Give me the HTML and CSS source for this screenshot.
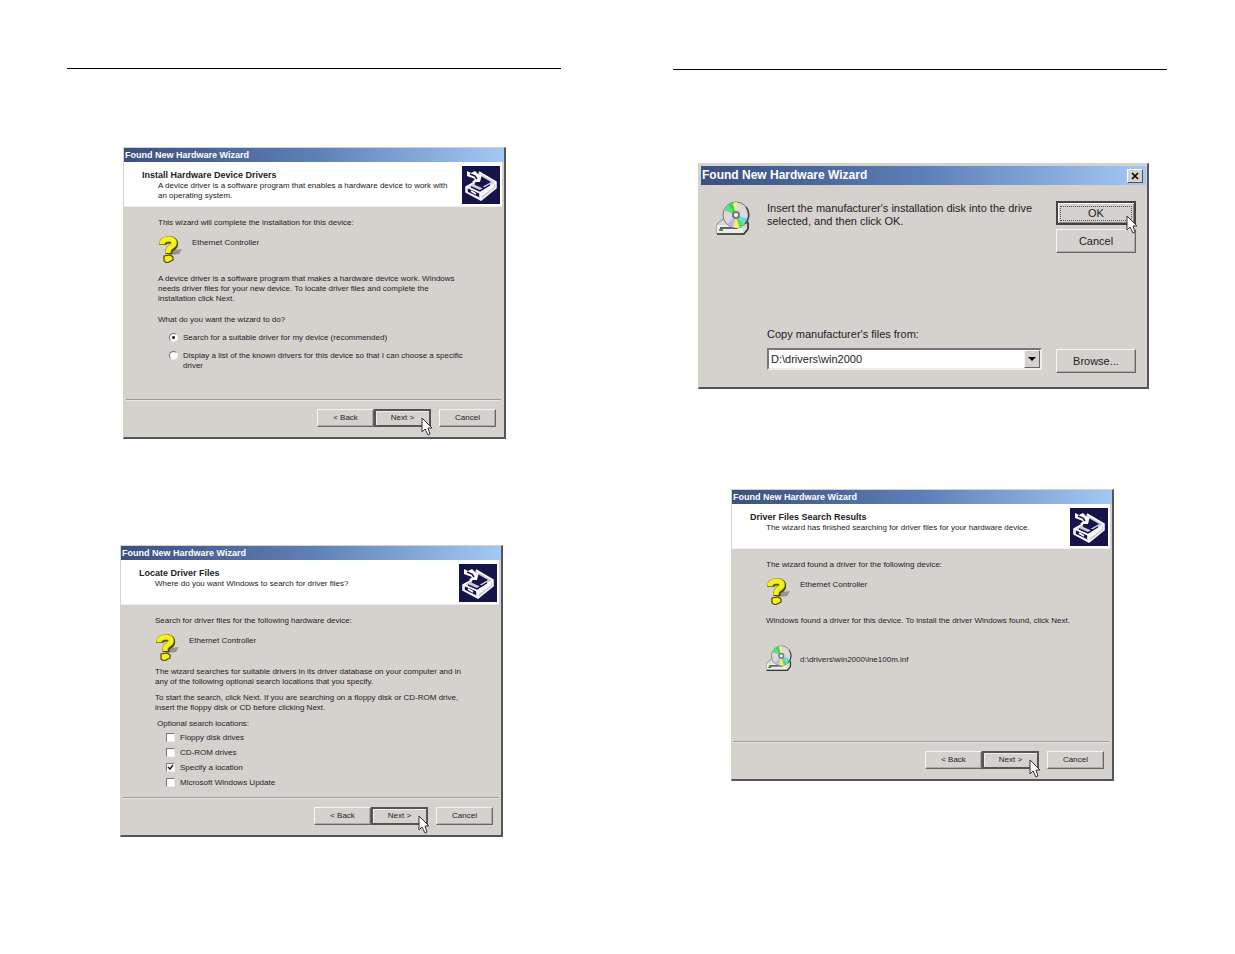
FILE: index.html
```
<!DOCTYPE html>
<html lang="en">

<head>
    <meta charset="UTF-8">
    <meta name="viewport" content="width=device-width, initial-scale=1.0">
    <title>Found New Hardware Wizard</title>
    <link rel="stylesheet" href="styles.css">
</head>

<body>
    <!-- shared icons -->
    <svg class="icon-defs" aria-hidden="true">
        <symbol id="icon-card" viewBox="0 0 38 38">
            <rect width="38" height="38" fill="#14144a"/>
            <path d="M17 6L34 16V22L19 34L4 26V21L13 16Z" fill="#c9cbdc"/>
            <path d="M17 9L29 16L20 21L12 17L18 13Z" fill="#14144a"/>
            <path d="M6 22L17 27V31L6 26Z" fill="#14144a"/>
            <path d="M20 27L32 18V21L20 30Z" fill="#fff"/>
            <path d="M9 21L18 25L28 19M13 18L22 22" fill="none" stroke="#14144a" stroke-width="1.5"/>
            <path d="M17 6L34 16V22L19 34L4 26V21L13 16M5 21L18 27L33 17M19 27V33M9 25L14 28" fill="none" stroke="#fff" stroke-width="1.5"/>
            <path d="M5 5L9 7L13 5L17 9L20 8L18 16H10L13 13L5 10Z" fill="#fff"/>
            <path d="M8 8L13 10L15 13" fill="none" stroke="#14144a" stroke-width="1.5"/>
        </symbol>
        <symbol id="icon-question" viewBox="0 0 26 27">
            <path d="M15 14L24 13L21 18L13 19Z" fill="#969492"/>
            <path d="M5 9C5 4 9 4 12 4C17 4 18 8 15 11C12 13 11 13 11 18" fill="none" stroke="#4a4708" stroke-width="7"/>
            <path d="M4 9C4 4 8 3 11 3C16 3 18 8 14 10C11 12 10 13 10 17" fill="none" stroke="#8a8410" stroke-width="6"/>
            <path d="M4 8C4 4 8 3 11 3C16 3 18 7 14 10C11 12 10 13 10 17" fill="none" stroke="#f6f01c" stroke-width="5"/>
            <path d="M6 20L12 19L15 21V24L9 27L6 25Z" fill="#f6f01c" stroke="#4a4708" stroke-width="1.2"/>
        </symbol>
        <symbol id="icon-disc" viewBox="0 0 34 35">
            <path d="M1 23L7 18H30L32 21V28L28 33H1Z" fill="#d9d9d9" stroke="#888" stroke-width="1"/>
            <path d="M1 24H27V32H1Z" fill="#eee"/>
            <path d="M1 33H28L32 28V21M4 27H22" fill="none" stroke="#333" stroke-width="1.6"/>
            <path d="M3 29H7" stroke="#38a038" stroke-width="2"/>
            <circle cx="20" cy="14" r="13" fill="#dadada" stroke="#777" stroke-width="1"/>
            <path d="M20 14L8 9A13 13 0 0 1 12 4Z" fill="#61dc8a"/>
            <path d="M20 14L12 4A13 13 0 0 1 17 2Z" fill="#36d84a"/>
            <path d="M20 14L17 2A13 13 0 0 1 21 1Z" fill="#f5f17a"/>
            <path d="M20 14L32 18A13 13 0 0 1 28 24Z" fill="#62dce2"/>
            <path d="M20 14L28 24A13 13 0 0 1 23 27Z" fill="#54df58"/>
            <path d="M20 14L23 27A13 13 0 0 1 17 26Z" fill="#f4ee68"/>
            <path d="M20 14L17 26A13 13 0 0 1 11 23Z" fill="#c6b4e8"/>
            <path d="M30 6A13 13 0 0 1 29 23" fill="none" stroke="#444" stroke-width="1.4"/>
            <circle cx="20" cy="14" r="4" fill="#777"/>
            <circle cx="20" cy="14" r="2" fill="#fff"/>
        </symbol>
        <symbol id="icon-cursor" viewBox="0 0 12 19">
            <path d="M1 1V15L4 12L7 18L9 17L7 11H11Z" fill="#fff" stroke="#333" stroke-width="1"/>
        </symbol>
    </svg>

    <main class="spread">
        <section class="page">
            <div class="dialog dialog-install">
                <div class="title-bar">Found New Hardware Wizard</div>
                <header class="dialog-header">
                    <div>
                        <h2>Install Hardware Device Drivers</h2>
                        <p>A device driver is a software program that enables a hardware device to work with<br>an operating system.</p>
                    </div>
                    <svg class="card-icon"><use href="#icon-card"/></svg>
                </header>
                <div class="dialog-body">
                    <p>This wizard will complete the installation for this device:</p>
                    <div class="device">
                        <svg class="device-icon"><use href="#icon-question"/></svg>
                        <span>Ethernet Controller</span>
                    </div>
                    <p class="spaced">A device driver is a software program that makes a hardware device work. Windows<br>needs driver files for your new device. To locate driver files and complete the<br>installation click Next.</p>
                    <p class="spaced">What do you want the wizard to do?</p>
                    <div class="radios">
                        <label class="option"><input type="radio" name="action" checked><span>Search for a suitable driver for my device (recommended)</span></label>
                        <label class="option"><input type="radio" name="action"><span>Display a list of the known drivers for this device so that I can choose a specific<br>driver</span></label>
                    </div>
                </div>
                <footer class="dialog-footer">
                    <button type="button">&lt; Back</button>
                    <button type="button" class="default">Next &gt;<svg class="cursor"><use href="#icon-cursor"/></svg></button>
                    <button type="button" class="cancel">Cancel</button>
                </footer>
            </div>

            <div class="dialog dialog-locate">
                <div class="title-bar">Found New Hardware Wizard</div>
                <header class="dialog-header">
                    <div>
                        <h2>Locate Driver Files</h2>
                        <p>Where do you want Windows to search for driver files?</p>
                    </div>
                    <svg class="card-icon"><use href="#icon-card"/></svg>
                </header>
                <div class="dialog-body">
                    <p>Search for driver files for the following hardware device:</p>
                    <div class="device">
                        <svg class="device-icon"><use href="#icon-question"/></svg>
                        <span>Ethernet Controller</span>
                    </div>
                    <p class="close">The wizard searches for suitable drivers in its driver database on your computer and in<br>any of the following optional search locations that you specify.</p>
                    <p class="close">To start the search, click Next. If you are searching on a floppy disk or CD-ROM drive,<br>insert the floppy disk or CD before clicking Next.</p>
                    <p class="close options-title">Optional search locations:</p>
                    <div class="checks">
                        <label class="option"><input type="checkbox"><span>Floppy disk drives</span></label>
                        <label class="option"><input type="checkbox"><span>CD-ROM drives</span></label>
                        <label class="option"><input type="checkbox" checked><span>Specify a location</span></label>
                        <label class="option"><input type="checkbox"><span>Microsoft Windows Update</span></label>
                    </div>
                </div>
                <footer class="dialog-footer">
                    <button type="button">&lt; Back</button>
                    <button type="button" class="default">Next &gt;<svg class="cursor"><use href="#icon-cursor"/></svg></button>
                    <button type="button" class="cancel">Cancel</button>
                </footer>
            </div>
        </section>

        <section class="page page-right">
            <div class="dialog dialog-disk">
                <div class="title-bar">
                    <span>Found New Hardware Wizard</span>
                    <button type="button" class="close-button" aria-label="Close">
                        <svg viewBox="0 0 8 8"><path d="M1 1L7 7M7 1L1 7" stroke="#000" stroke-width="1.6"/></svg>
                    </button>
                </div>
                <div class="disk-body">
                    <svg class="disk-icon"><use href="#icon-disc"/></svg>
                    <div class="disk-form">
                        <p>Insert the manufacturer's installation disk into the drive<br>selected, and then click OK.</p>
                        <div>
                            <label for="source">Copy manufacturer's files from:</label>
                            <div class="combo">
                                <select id="source">
                                    <option>D:\drivers\win2000</option>
                                </select>
                                <span class="combo-arrow"></span>
                            </div>
                        </div>
                    </div>
                    <div class="disk-buttons">
                        <button type="button" class="default"><span class="focus">OK</span><svg class="cursor"><use href="#icon-cursor"/></svg></button>
                        <button type="button">Cancel</button>
                        <button type="button" class="browse">Browse...</button>
                    </div>
                </div>
            </div>

            <div class="dialog dialog-results">
                <div class="title-bar">Found New Hardware Wizard</div>
                <header class="dialog-header">
                    <div>
                        <h2>Driver Files Search Results</h2>
                        <p>The wizard has finished searching for driver files for your hardware device.</p>
                    </div>
                    <svg class="card-icon"><use href="#icon-card"/></svg>
                </header>
                <div class="dialog-body">
                    <p>The wizard found a driver for the following device:</p>
                    <div class="device">
                        <svg class="device-icon"><use href="#icon-question"/></svg>
                        <span>Ethernet Controller</span>
                    </div>
                    <p class="spaced">Windows found a driver for this device. To install the driver Windows found, click Next.</p>
                    <div class="device driver-file">
                        <svg class="device-icon"><use href="#icon-disc"/></svg>
                        <span>d:\drivers\win2000\lne100m.inf</span>
                    </div>
                </div>
                <footer class="dialog-footer">
                    <button type="button">&lt; Back</button>
                    <button type="button" class="default">Next &gt;<svg class="cursor"><use href="#icon-cursor"/></svg></button>
                    <button type="button" class="cancel">Cancel</button>
                </footer>
            </div>
        </section>
    </main>
</body>

</html>
```
FILE: styles.css
```
* {
    box-sizing: border-box;
}

body {
    margin: 0;
    background-color: #fff;
    color: #222;
    font-family: "Liberation Sans", Arial, sans-serif;
    font-size: 8px;
    line-height: 10px;
}

h2,
p {
    margin: 0;
}

button,
select,
input {
    margin: 0;
    font: inherit;
    color: inherit;
}

.icon-defs {
    position: absolute;
    width: 0;
    height: 0;
}

.spread {
    display: grid;
    grid-template-columns: 1fr 1fr;
    gap: 112px;
    padding: 68px 68px 68px 67px;
}

.page {
    border-top: 1px solid #000;
}

.page-right {
    margin-top: 1px;
}

/* dialogs */

.dialog {
    display: flex;
    flex-direction: column;
    max-width: 383px;
    min-height: 292px;
    background-color: #d5d2ce;
    border: 1px solid #d5d2ce;
    border-right: 2px solid #55555a;
    border-bottom: 2px solid #55555a;
}

.dialog-install {
    margin: 78px 0 0 56px;
}

.dialog-locate {
    margin: 106px 0 0 53px;
}

.dialog-disk {
    max-width: 451px;
    min-height: 226px;
    margin: 93px 0 0 25px;
    padding: 2px 1px 0 2px;
    font-size: 11px;
    line-height: 13px;
}

.dialog-results {
    margin: 100px 0 0 58px;
}

.title-bar {
    display: flex;
    align-items: center;
    justify-content: space-between;
    height: 14px;
    padding: 0 1px;
    background: linear-gradient(to right, #3b5080, #5d7fb8 50%, #a4c8f5);
    color: #fff;
    font-size: 9px;
    font-weight: bold;
}

.dialog-header {
    display: flex;
    justify-content: space-between;
    min-height: 45px;
    margin-right: 2px;
    padding: 4px 2px 2px 18px;
    background-color: #fff;
    border-bottom: 1px solid #eee;
}

.dialog-header h2 {
    padding-top: 4px;
    font-size: 9px;
    line-height: 11px;
}

.dialog-header p {
    padding-left: 16px;
}

.card-icon {
    flex: none;
    width: 38px;
    height: 38px;
}

.dialog-body {
    flex: 1;
    padding: 11px 24px 4px 34px;
}

.device {
    display: flex;
    gap: 8px;
    margin-top: 8px;
}

.device span {
    padding-top: 2px;
}

.device-icon {
    width: 26px;
    height: 27px;
}

.driver-file {
    align-items: center;
    margin-top: 19px;
}

.spaced {
    margin-top: 11px;
}

.close {
    margin-top: 6px;
}

/* options */

.options-title {
    padding-left: 2px;
}

.radios,
.checks {
    display: flex;
    flex-direction: column;
    padding-left: 11px;
}

.radios {
    gap: 8px;
    padding-top: 8px;
}

.checks {
    gap: 5px;
    padding-top: 4px;
}

.option {
    display: flex;
    gap: 5px;
}

.option input {
    appearance: none;
    flex: none;
    width: 9px;
    height: 9px;
    background-color: #fff;
    border: 1px solid;
    border-color: #777 #eee #eee #777;
}

.option input[type="radio"] {
    border-radius: 50%;
}

.option input[type="radio"]:checked {
    background-image: radial-gradient(circle, #222 1px, #fff 2px);
}

.option input[type="checkbox"]:checked {
    background-image: url("data:image/svg+xml,%3Csvg xmlns='http://www.w3.org/2000/svg' viewBox='0 0 7 7'%3E%3Cpath d='M1 3L3 5L6 1' fill='none' stroke='%23222' stroke-width='1.5'/%3E%3C/svg%3E");
}

/* buttons */

.dialog-footer {
    display: flex;
    justify-content: flex-end;
    margin: 0 3px 0 2px;
    padding: 9px 5px 10px;
    border-top: 1px solid #999;
    box-shadow: inset 0 1px #e8e6e3;
}

.dialog-footer button,
.disk-buttons button {
    position: relative;
    padding: 0;
    background-color: #d5d2ce;
    border: 1px solid;
    border-color: #f4f4f4 #666 #666 #f4f4f4;
    box-shadow: inset -1px -1px #aaa;
}

.dialog-footer button {
    width: 57px;
    height: 18px;
}

.dialog-footer .default {
    border: 2px solid #555;
    box-shadow: inset 1px 1px #eee;
}

.dialog-footer .cancel {
    margin-left: 8px;
}

.cursor {
    position: absolute;
    right: -4px;
    bottom: -11px;
    width: 12px;
    height: 19px;
    z-index: 1;
}

/* disk dialog */

.dialog-disk .title-bar {
    height: 19px;
    padding: 0 3px 0 1px;
    font-size: 12px;
}

.close-button {
    display: flex;
    align-items: center;
    justify-content: center;
    width: 16px;
    height: 14px;
    padding: 0;
    background-color: #d5d2ce;
    border: 1px solid;
    border-color: #fff #555 #555 #fff;
}

.close-button svg {
    width: 8px;
    height: 8px;
}

.disk-body {
    display: flex;
    flex: 1;
    padding: 16px 10px 14px 15px;
}

.disk-icon {
    flex: none;
    width: 34px;
    height: 35px;
}

.disk-form {
    display: flex;
    flex: 1;
    flex-direction: column;
    justify-content: space-between;
    padding: 1px 14px 3px 17px;
}

.combo {
    position: relative;
    margin-top: 7px;
}

.combo select {
    appearance: none;
    display: block;
    width: 100%;
    height: 22px;
    padding: 0 20px 0 2px;
    background-color: #fff;
    border: 2px solid;
    border-color: #777 #eee #eee #777;
    border-radius: 0;
}

.combo-arrow {
    position: absolute;
    top: 2px;
    right: 2px;
    display: flex;
    align-items: center;
    justify-content: center;
    width: 16px;
    height: 18px;
    background-color: #d5d2ce;
    border: 1px solid;
    border-color: #f4f4f4 #666 #666 #f4f4f4;
    pointer-events: none;
}

.combo-arrow::after {
    content: "";
    border: 4px solid transparent;
    border-top-color: #000;
    border-bottom: 0;
}

.disk-buttons {
    display: flex;
    flex-direction: column;
    gap: 4px;
    width: 80px;
}

.disk-buttons button {
    height: 24px;
}

.disk-buttons .default {
    padding: 2px;
    border: 2px solid #444;
    box-shadow: inset 1px 1px #fff, inset -1px -1px #888;
}

.focus {
    display: block;
    border: 1px dotted #555;
}

.disk-buttons .browse {
    margin-top: auto;
}
```
